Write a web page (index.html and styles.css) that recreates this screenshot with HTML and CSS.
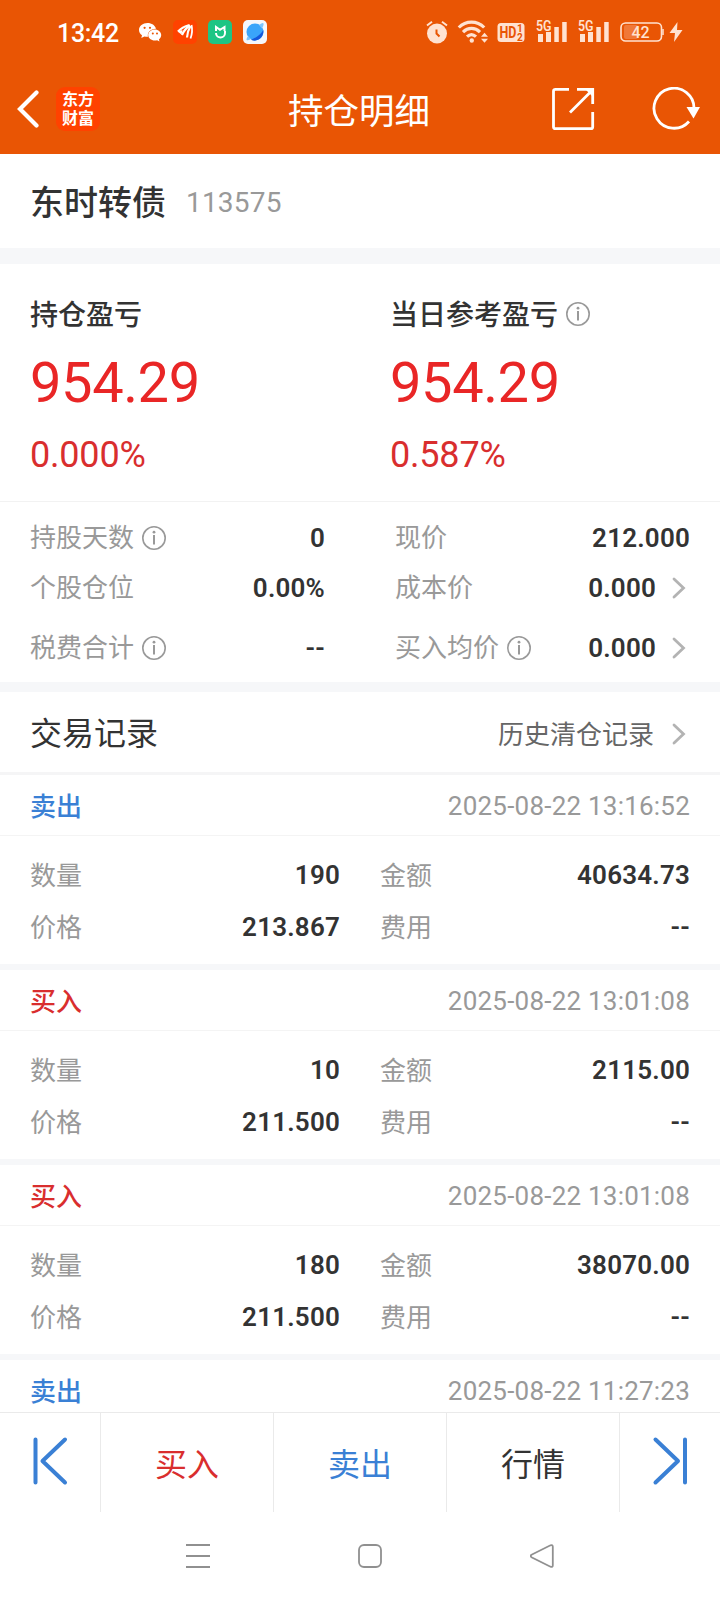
FILE: index.html
```
<!DOCTYPE html>
<html lang="zh-CN">
<head>
  <meta charset="UTF-8" />
  <meta name="viewport" content="width=device-width, initial-scale=1.0"/>
  <title>持仓明细</title>
  <link rel="stylesheet" href="styles.css">
</head>
<body>
  <!-- shared icons -->
  <svg class="sprite" width="0" height="0">
    <symbol id="info" viewBox="0 0 24 24">
      <circle cx="12" cy="12" r="11.2" fill="none" stroke="#999" stroke-width="1.6"/>
      <circle cx="12" cy="6.2" r="1.4" fill="#999"/>
      <path d="M12 9v9.500" stroke="#999" stroke-width="2"/>
    </symbol>
    <symbol id="arrow" viewBox="0 0 14 22">
      <path d="M2 2l9.500 9L2 20" fill="none" stroke="#b3b3b3" stroke-width="2.8" stroke-linecap="round"/>
    </symbol>
    <symbol id="signal" viewBox="0 0 32 24">
      <text x="0" y="11.200" font-size="14" font-weight="600" textLength="15.500" lengthAdjust="spacingAndGlyphs">5G</text>
      <path d="M2 14h5v8H2zM10 12h5v10h-5zM18.300 7h4.500v15h-4.500zM26.200 2h4.500v20h-4.500z"/>
    </symbol>
  </svg>

  <header>
    <div class="status-bar">
      <span class="time">13:42</span>
      <div class="app-icons">
        <svg width="24" height="24" viewBox="0 0 24 24" fill="#fff">
          <path d="M9.500 3C4.800 3 1 6.100 1 10c0 2.200 1.200 4 3 5.300L3.300 18l3.100-1.600c1 .3 2 .4 3.100.4h.5C9 12.500 12.500 8.600 18 8.700 17.200 5.400 13.700 3 9.500 3z"/>
          <path d="M16.800 9.500c-3.700 0-6.600 2.500-6.600 5.500s2.900 5.500 6.600 5.500c.8 0 1.600-.1 2.300-.3l2.400 1.400-.6-2.200c1.400-1 2.300-2.600 2.300-4.400 0-3-2.800-5.500-6.400-5.500z"/>
          <g fill="#e95504"><circle cx="6.600" cy="7.800" r="1.100"/><circle cx="12" cy="7.800" r="1.100"/><circle cx="14.800" cy="13.500" r="1"/><circle cx="19" cy="13.500" r="1"/></g>
        </svg>
        <svg width="24" height="24" viewBox="0 0 24 24">
          <rect width="24" height="24" rx="5" fill="#ff4200"/>
          <g fill="none" stroke="#fff" stroke-width="2.200">
            <path d="M5 11.500Q9 7 16.500 5"/>
            <path d="M9 15Q11.500 9 17 5.500"/>
            <path d="M14 17.500Q14.500 11 17.500 6"/>
            <path d="M17.500 18.500Q20 12 18.500 5" stroke-width="1.800"/>
          </g>
          <path d="M4.500 11.500l5-1.500-1 4.500z" fill="#fff"/>
        </svg>
        <svg width="24" height="24" viewBox="0 0 24 24">
          <rect width="24" height="24" rx="5" fill="#1dc584"/>
          <path d="M8 11V7l4 2.800L16.500 7v4M8 13c0 6 9 6 9 0V11" fill="none" stroke="#fff" stroke-width="2"/>
        </svg>
        <svg width="24" height="24" viewBox="0 0 24 24">
          <rect width="24" height="24" rx="5" fill="#f5f7fb"/>
          <circle cx="12" cy="12" r="8.500" fill="#3aa5fa"/>
          <path d="M20.300 10c1 7-6 13-12.300 9.700C13 18 18 14.500 20.300 10z" fill="#1558dc"/>
          <path d="M16 5q4-3 4.500-1.500T19 8.500M5 16q-2 3-1.300 4t4.300-1" fill="#7cc4fb"/>
        </svg>
      </div>
      <div class="sys-icons">
        <svg class="alarm" width="24" height="24" viewBox="0 0 24 24">
          <circle cx="12" cy="13.500" r="10"/>
          <path d="M2 5.500L7 1.800M17 1.800l5 3.700" stroke="#ffe2d1" stroke-width="2"/>
          <path d="M11.500 9.500v4l3 3" fill="none" stroke="#e95504" stroke-width="2"/>
        </svg>
        <svg class="wifi" width="32" height="24" viewBox="0 0 32 24">
          <g fill="none" stroke="#ffe2d1" stroke-width="3.200">
            <path d="M1.800 7.500c7.200-7.300 18.200-7.300 25.400 0M6 12.200c5-5 12-5 17 0M10 16.700c3-2.800 6-2.800 9 0"/>
          </g>
          <circle cx="14.800" cy="20.500" r="2.200"/>
          <path d="M24 16.800l3.500-4 3.500 4zM24 18.800l3.500 4 3.500-4z"/>
        </svg>
        <svg class="hd" width="28" height="24" viewBox="0 0 28 24">
          <rect x=".5" y="3" width="27" height="19" rx="3.500"/>
          <g fill="#e95504" font-weight="700">
            <text x="2.500" y="18" font-size="16" textLength="17" lengthAdjust="spacingAndGlyphs">HD</text>
            <text x="20" y="12" font-size="10">1</text>
            <text x="20" y="20.500" font-size="10">2</text>
          </g>
        </svg>
        <svg class="sig1" width="32" height="24"><use href="#signal"/></svg>
        <svg class="sig2" width="32" height="24"><use href="#signal"/></svg>
        <svg class="battery" width="45" height="24" viewBox="0 0 45 24">
          <rect x="4" y="5" width="14" height="14" rx="2" fill="#f07838"/>
          <rect x="1" y="3" width="40.500" height="18" rx="4.500" fill="none" stroke="#ffe2d1" stroke-width="1.600"/>
          <path d="M43 9v6" stroke="#ffe2d1" stroke-width="1.500"/>
          <text x="11.500" y="17.700" font-size="16" font-weight="500">42</text>
        </svg>
        <svg class="bolt" width="14" height="24" viewBox="0 0 14 24"><path d="M8.500 2L.5 13h5.500l-1 9L13.500 10H8z"/></svg>
      </div>
    </div>

    <div class="title-bar">
      <div class="left">
        <svg width="24" height="38" viewBox="0 0 24 38"><path d="M20.500 2.500L4 19l16.500 16.500" fill="none" stroke="#fff" stroke-width="4.200" stroke-linecap="round"/></svg>
        <div class="logo">东方<br>财富</div>
      </div>
      <h1>持仓明细</h1>
      <div class="right">
        <svg width="44" height="44" viewBox="0 0 44 44" fill="none" stroke="#fff" stroke-width="2.800">
          <path d="M18 2.300H4.500q-2 0-2 2V40q0 1.700 2 1.700H40q1.700 0 1.700-1.700V25M26 2.300h15.700V17M19 25.500L40.500 4"/>
          <path d="M34 2h8v8z" fill="#fff" stroke="none"/>
        </svg>
        <svg width="50" height="44" viewBox="0 0 50 44">
          <path d="M37 34.500A20 20 0 1 1 42 22" fill="none" stroke="#fff" stroke-width="2.800"/>
          <path d="M34.500 20h13.500L41.500 31.500z" fill="#fff"/>
        </svg>
      </div>
    </div>
  </header>

  <section class="stock">
    <h2>东时转债</h2>
    <span class="code">113575</span>
  </section>

  <section class="profit">
    <div>
      <h3>持仓盈亏</h3>
      <p class="amount">954.29</p>
      <p class="rate">0.000%</p>
    </div>
    <div>
      <h3>当日参考盈亏<svg class="info"><use href="#info"/></svg></h3>
      <p class="amount">954.29</p>
      <p class="rate">0.587%</p>
    </div>
  </section>

  <section class="detail">
    <div class="item"><span>持股天数<svg class="info"><use href="#info"/></svg></span><b>0</b></div>
    <div class="item"><span>现价</span><b>212.000</b></div>
    <div class="item"><span>个股仓位</span><b>0.00%</b></div>
    <div class="item"><span>成本价</span><b>0.000<svg class="arrow"><use href="#arrow"/></svg></b></div>
    <div class="item"><span>税费合计<svg class="info"><use href="#info"/></svg></span><b>--</b></div>
    <div class="item"><span>买入均价<svg class="info"><use href="#info"/></svg></span><b>0.000<svg class="arrow"><use href="#arrow"/></svg></b></div>
  </section>

  <section class="history">
    <h4>交易记录</h4>
    <a>历史清仓记录<svg class="arrow"><use href="#arrow"/></svg></a>
  </section>

  <main>
    <div class="record">
      <div class="record-head"><span class="sell">卖出</span><time>2025-08-22 13:16:52</time></div>
      <div class="record-body">
        <div class="item"><span>数量</span><b>190</b></div>
        <div class="item"><span>金额</span><b>40634.73</b></div>
        <div class="item"><span>价格</span><b>213.867</b></div>
        <div class="item"><span>费用</span><b>--</b></div>
      </div>
    </div>
    <div class="record">
      <div class="record-head"><span class="buy">买入</span><time>2025-08-22 13:01:08</time></div>
      <div class="record-body">
        <div class="item"><span>数量</span><b>10</b></div>
        <div class="item"><span>金额</span><b>2115.00</b></div>
        <div class="item"><span>价格</span><b>211.500</b></div>
        <div class="item"><span>费用</span><b>--</b></div>
      </div>
    </div>
    <div class="record">
      <div class="record-head"><span class="buy">买入</span><time>2025-08-22 13:01:08</time></div>
      <div class="record-body">
        <div class="item"><span>数量</span><b>180</b></div>
        <div class="item"><span>金额</span><b>38070.00</b></div>
        <div class="item"><span>价格</span><b>211.500</b></div>
        <div class="item"><span>费用</span><b>--</b></div>
      </div>
    </div>
    <div class="record">
      <div class="record-head"><span class="sell">卖出</span><time>2025-08-22 11:27:23</time></div>
    </div>
  </main>

  <nav class="trade-bar">
    <a><svg width="36" height="50" viewBox="0 0 36 50"><path d="M3.500 3.500v43M33 3.500L10.500 25 33 46.500"/></svg></a>
    <a class="buy">买入</a>
    <a class="sell">卖出</a>
    <a>行情</a>
    <a><svg width="36" height="50" viewBox="0 0 36 50"><path d="M33 3.500v43M3.500 3.500L26 25 3.500 46.500"/></svg></a>
  </nav>

  <footer>
    <svg width="24" height="24" viewBox="0 0 24 24"><path d="M0 1h24M0 12h24M0 23h24"/></svg>
    <svg width="24" height="24" viewBox="0 0 24 24"><rect x="1" y="1" width="22" height="22" rx="5"/></svg>
    <svg width="24" height="24" viewBox="0 0 24 24"><path d="M1.500 10.800L20.500 1.300q2.300-.8 2.300 1.500v18.400q0 2.300-2.300 1.500L1.500 13.200q-1.500-1.200 0-2.400z"/></svg>
  </footer>
</body>
</html>
```
FILE: styles.css
```
* {
  box-sizing: border-box;
  margin: 0;
  padding: 0;
}

body {
  width: 720px;
  height: 1600px;
  overflow: hidden;
  display: flex;
  flex-direction: column;
  background-color: #fff;
  color: #333;
  font-family: Roboto, "Noto Sans CJK SC", sans-serif;
  font-size: 26px;
  line-height: 1.2;
}

svg {
  display: block;
  flex: none;
}

.sprite {
  display: none;
}

header {
  height: 154px;
  flex: none;
  background-color: #e95504;
  color: #fff;
}

/* phone status bar */
.status-bar {
  height: 64px;
  display: flex;
  align-items: center;
  padding: 0 37px 0 57px;
}

.time {
  width: 81px;
  font-size: 25px;
  font-weight: 500;
  letter-spacing: -0.3px;
  padding-top: 3px;
}

.app-icons {
  display: flex;
  gap: 11px;
}

.sys-icons {
  display: flex;
  margin-left: auto;
  fill: #ffe2d1;
}

.wifi,
.hd {
  margin-left: 8px;
}

.sig1 {
  margin-left: 11px;
}

.sig2 {
  margin-left: 10px;
}

.battery {
  margin-left: 10px;
}

.bolt {
  margin-left: 4px;
}

.title-bar {
  height: 90px;
  display: grid;
  grid-template-columns: 200px 1fr 200px;
  align-items: center;
  padding: 0 18px 0 16px;
}

.left,
.right {
  display: flex;
  align-items: center;
}

.left {
  gap: 16px;
}

.right {
  justify-content: flex-end;
  gap: 57px;
}

.logo {
  width: 44px;
  height: 44px;
  padding-top: 3px;
  border-radius: 9px;
  background-color: #ff4200;
  font-size: 16px;
  font-weight: 700;
  line-height: 19px;
  text-align: center;
}

h1 {
  font-size: 35.5px;
  font-weight: 400;
  text-align: center;
  padding-top: 7px;
}

.stock {
  height: 110px;
  flex: none;
  display: flex;
  align-items: center;
  padding: 4px 30px 0;
  border-bottom: 16px solid #f6f7f9;
}

h2 {
  font-size: 34px;
  font-weight: 500;
}

.code {
  margin-left: 20px;
  font-size: 28px;
  letter-spacing: 0.2px;
  color: #999;
}

.profit {
  height: 238px;
  flex: none;
  display: grid;
  grid-template-columns: 1fr 1fr;
  padding: 32px 0 0 30px;
  border-bottom: 1px solid #f2f2f2;
}

.profit > div + div {
  padding-left: 15px;
}

h3 {
  display: flex;
  align-items: center;
  height: 40px;
  font-size: 28px;
  font-weight: 500;
}

.info {
  width: 24px;
  height: 24px;
  margin: -3px 0 0 8px;
}

h3 .info {
  margin-top: -5px;
}

.amount {
  height: 60px;
  margin-top: 17px;
  font-size: 56px;
  line-height: 60px;
  letter-spacing: -0.4px;
  color: #e92626;
}

.rate {
  height: 40px;
  margin-top: 22px;
  font-size: 36px;
  line-height: 40px;
  letter-spacing: -0.2px;
  color: #d92e2e;
}

.item {
  display: flex;
  align-items: center;
  justify-content: space-between;
}

.item span {
  display: flex;
  align-items: center;
  padding-top: 2px;
  color: #999;
}

.item b {
  display: flex;
  align-items: center;
  padding-top: 2px;
  font-weight: 600;
  letter-spacing: 0.2px;
}

.arrow {
  width: 14px;
  height: 22px;
  margin: -3px 4px 0 16px;
}

.detail {
  height: 190px;
  flex: none;
  display: grid;
  grid-template-columns: 295px 295px;
  grid-template-rows: 42px 58px 62px;
  column-gap: 70px;
  padding: 15px 30px 0;
  border-bottom: 10px solid #f6f7f9;
}

.history {
  height: 83px;
  flex: none;
  display: flex;
  align-items: center;
  justify-content: space-between;
  padding: 4px 30px 0;
  border-bottom: 3px solid #f5f5f6;
}

h4 {
  font-size: 32px;
  font-weight: 400;
}

.history a {
  display: flex;
  align-items: center;
  padding-top: 4px;
  color: #666;
}

.history .arrow {
  margin: -5px 4px 0 18px;
}

main {
  height: 637px;
  flex: none;
  overflow: hidden;
}

.record {
  height: 195px;
  border-bottom: 6px solid #f6f7f9;
}

.record-head {
  height: 61px;
  display: flex;
  align-items: center;
  justify-content: space-between;
  padding: 4px 30px 0;
  border-bottom: 1px solid #f4f4f4;
}

.record-head span {
  padding-top: 2px;
  font-weight: 500;
}

.record-head time {
  letter-spacing: 0.22px;
  color: #999;
}

.buy {
  color: #d92e2e;
}

.sell {
  color: #3a80d5;
}

.record-body {
  display: grid;
  grid-template-columns: 310px 310px;
  grid-auto-rows: 52px;
  column-gap: 40px;
  padding: 13px 30px 0;
}

.record-body span {
  padding-top: 4px;
}

/* buy / sell bar */
.trade-bar {
  height: 100px;
  flex: none;
  display: grid;
  grid-template-columns: 100px 173px 173px 173px 101px;
  border-top: 1px solid #eaeaea;
}

.trade-bar a {
  display: flex;
  align-items: center;
  justify-content: center;
  padding-top: 6px;
  font-size: 32px;
}

.trade-bar a + a {
  border-left: 1px solid #eaeaea;
}

.trade-bar svg {
  margin-top: -9px;
  fill: none;
  stroke: #3a80d5;
  stroke-width: 4;
  stroke-linecap: round;
  stroke-linejoin: round;
}

footer {
  height: 88px;
  display: flex;
  align-items: center;
  justify-content: center;
  gap: 148px;
  padding-left: 20px;
}

footer svg {
  fill: none;
  stroke: #909090;
  stroke-width: 1.8;
}
```
